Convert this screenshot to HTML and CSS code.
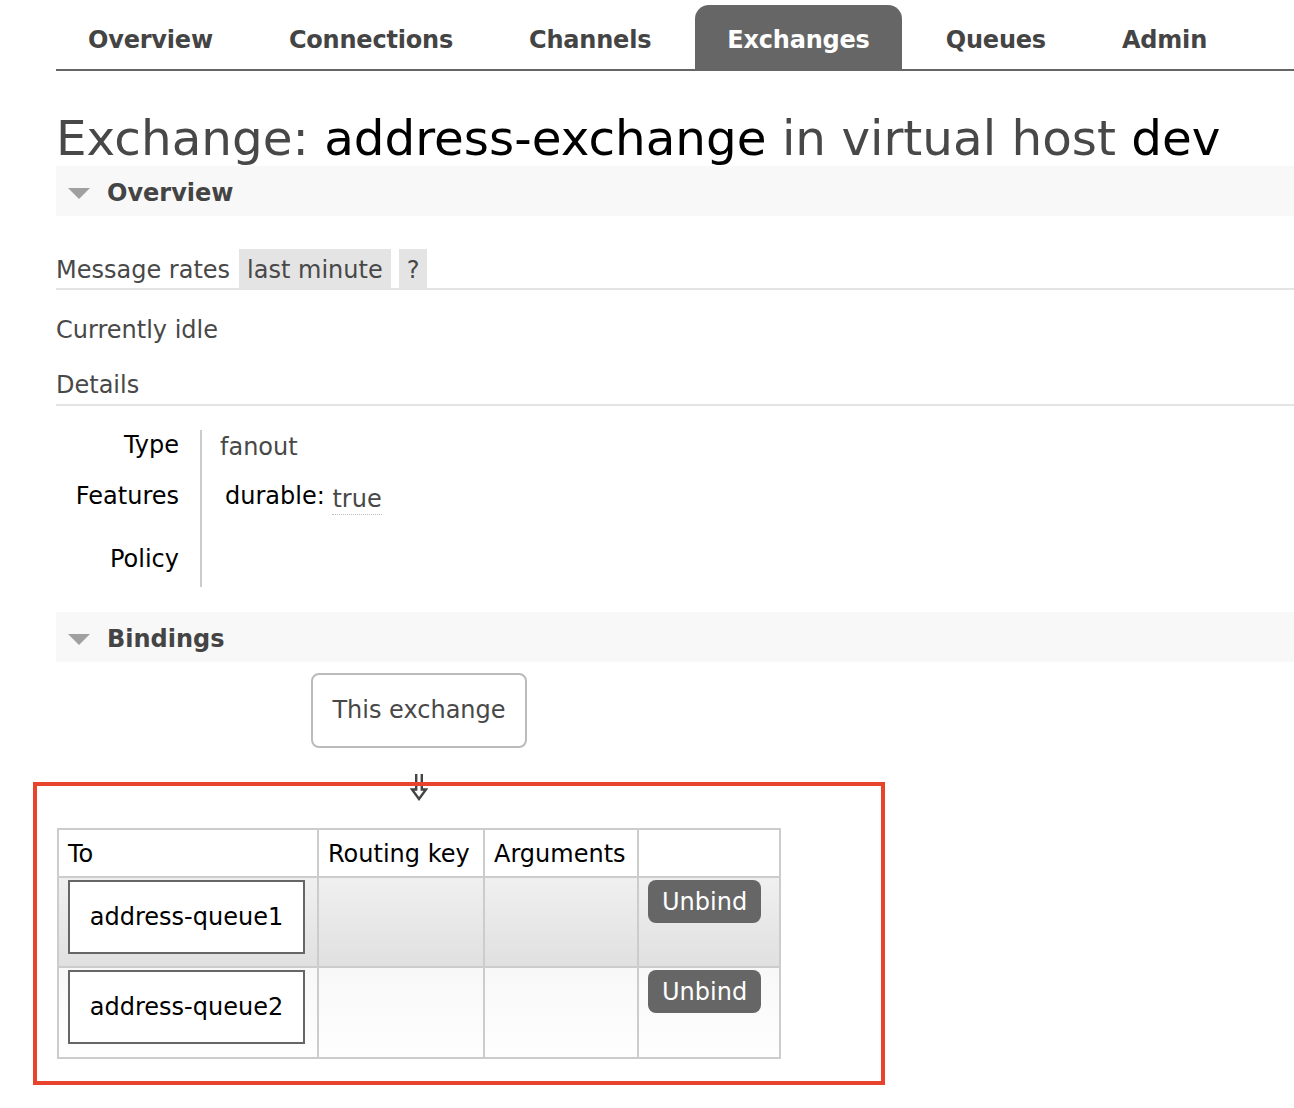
FILE: index.html
```html
<!DOCTYPE html>
<html lang="en">
<head>
<meta charset="utf-8">
<title>Exchange: address-exchange</title>
<link rel="stylesheet" href="styles.css">
</head>
<body>
<div class="page">
  <ul class="tabs">
    <li><a href="#">Overview</a></li>
    <li><a href="#">Connections</a></li>
    <li><a href="#">Channels</a></li>
    <li><a href="#" class="active">Exchanges</a></li>
    <li><a href="#">Queues</a></li>
    <li><a href="#">Admin</a></li>
  </ul>

  <h1 class="title">Exchange: <b>address-exchange</b> in virtual host <b>dev</b></h1>

  <div class="section">
    <h2 class="section-head"><span class="tri"></span>Overview</h2>
    <div class="rates-bar">
      <span class="rates-label">Message rates</span>
      <span class="chip">last minute</span>
      <span class="chip">?</span>
    </div>
    <p class="idle">Currently idle</p>
    <h3 class="sub">Details</h3>
    <table class="facts">
      <tr class="r1"><th>Type</th><td class="grey">fanout</td></tr>
      <tr class="r2"><th>Features</th><td><span class="feat">durable: <abbr class="val">true</abbr></span></td></tr>
      <tr class="r3"><th>Policy</th><td></td></tr>
    </table>
  </div>

  <div class="section">
    <h2 class="section-head"><span class="tri"></span>Bindings</h2>
    <div class="bindings">
      <div class="this-ex">This exchange</div>
      <svg class="arrow" width="18" height="28" viewBox="0 0 18 28" aria-hidden="true">
        <path d="M6.2 1 V16.5 H2 L9 26 L16 16.5 H11.8 V1" fill="none" stroke="#444" stroke-width="2.4" stroke-linejoin="miter"/>
      </svg>
      <table class="list">
        <thead>
          <tr><th class="c1">To</th><th class="c2">Routing key</th><th class="c3">Arguments</th><th class="c4"></th></tr>
        </thead>
        <tbody>
          <tr class="alt1">
            <td><span class="queue">address-queue1</span></td>
            <td></td><td></td>
            <td><button class="btn">Unbind</button></td>
          </tr>
          <tr class="alt2">
            <td><span class="queue">address-queue2</span></td>
            <td></td><td></td>
            <td><button class="btn">Unbind</button></td>
          </tr>
        </tbody>
      </table>
    </div>
  </div>

  <div class="annotation"></div>
</div>
</body>
</html>
```

FILE: styles.css
```css
html, body {
  margin: 0;
  padding: 0;
  background: #fff;
}
body {
  font-family: "DejaVu Sans", Verdana, sans-serif;
  font-size: 24px;
  line-height: 29px;
  color: #484848;
}
.page {
  position: relative;
  display: flow-root;
  padding-left: 56px;
  min-height: 1108px;
  box-sizing: border-box;
}

/* tabs */
.tabs {
  list-style: none;
  display: flex;
  gap: 12px;
  margin: 5px 0 0 0;
  padding: 0;
  border-bottom: 2px solid #666;
}
.tabs a {
  display: block;
  padding: 21px 32px 14px;
  font-weight: bold;
  letter-spacing: -0.2px;
  color: #444;
  text-decoration: none;
  border-radius: 14px 14px 0 0;
}
.tabs a.active {
  background: #666;
  color: #fff;
}

/* heading */
.title {
  margin: 39px 0 0 0;
  font-size: 48.4px;
  line-height: 56px;
  font-weight: normal;
  color: #484848;
  white-space: nowrap;
}
.title b {
  font-weight: normal;
  color: #000;
}

/* sections */
.section-head {
  margin: 0;
  background: #f8f8f8;
  height: 50px;
  box-sizing: border-box;
  padding: 13px 0 8px 12px;
  font-size: 24px;
  line-height: 29px;
  font-weight: bold;
  color: #444;
  display: flex;
  align-items: center;
}
.tri {
  width: 0;
  height: 0;
  border-left: 11px solid transparent;
  border-right: 11px solid transparent;
  border-top: 11px solid #a0a0a0;
  margin-right: 17px;
  margin-top: -1px;
}

.rates-bar {
  margin-top: 33px;
  display: flex;
  align-items: stretch;
  border-bottom: 2px solid #e4e4e4;
  height: 39px;
}
.rates-label {
  display: flex;
  align-items: center;
  margin-right: 9px;
  padding-top: 3px;
}
.chip {
  background: #e4e4e4;
  padding: 3px 8px 0;
  display: flex;
  align-items: center;
  margin-right: 8px;
}

.idle {
  margin: 26px 0 0 0;
}
.sub {
  margin: 26px 0 0 0;
  font-size: 24px;
  line-height: 29px;
  font-weight: normal;
  padding-bottom: 4px;
  border-bottom: 2px solid #e4e4e4;
}

.facts {
  border-collapse: collapse;
  margin-top: 24px;
}
.facts th {
  font-weight: normal;
  color: #000;
  text-align: right;
  vertical-align: top;
  padding: 0 21px 0 0;
  width: 123px;
  white-space: nowrap;
}
.facts td {
  vertical-align: top;
  border-left: 2px solid #ccc;
  padding: 0 20px 0 18px;
}
.facts .r1 th { height: 51px; padding-top: 1px; }
.facts .r1 td { padding-top: 3px; height: 49px; }
.facts .r2 th, .facts .r2 td { height: 63px; }
.facts .r3 th, .facts .r3 td { height: 42px; }
.grey { color: #484848; }
.feat {
  color: #000;
  padding-left: 5px;
}
.val {
  color: #484848;
  text-decoration: none;
  display: inline-block;
  position: relative;
  top: 3px;
  border-bottom: 1px dotted #bbb;
  padding-bottom: 2px;
  line-height: 26px;
}

.section + .section {
  margin-top: 25px;
}

/* bindings */
.bindings {
  display: inline-flex;
  flex-direction: column;
  align-items: center;
  margin-left: 1px;
}
.this-ex {
  margin-top: 11px;
  border: 2px solid #bbb;
  border-radius: 8px;
  padding: 21px 19px 21px 19px;
  color: #484848;
}
.arrow {
  display: block;
  margin-top: 25px;
  width: 18px;
  height: 28px;
}
.list {
  margin-top: 27px;
  border-collapse: collapse;
  border: 2px solid #ccc;
  color: #000;
}
.list th, .list td {
  border: 2px solid #ccc;
}
.list th {
  font-weight: normal;
  text-align: left;
  height: 48px;
  padding: 2px 9px 0;
  box-sizing: border-box;
  background: #fff;
  vertical-align: middle;
}
.list th.c1 { width: 260px; }
.list th.c2 { width: 166px; }
.list th.c3 { width: 154px; }
.list th.c4 { width: 142px; }
.list td {
  padding: 2px 10px 12px 9px;
  vertical-align: top;
  height: 74px;
}
.alt1 td { background: linear-gradient(#f0f0f0, #e0e0e0); }
.alt2 td { background: linear-gradient(#f8f8f8, #fefefe); }
.alt2 td { padding-bottom: 13px; }
.queue {
  display: block;
  width: 237px;
  height: 74px;
  box-sizing: border-box;
  border: 2px solid #666;
  background: #fff;
  color: #000;
  text-align: center;
  line-height: 70px;
}
.btn {
  font-family: "DejaVu Sans", Verdana, sans-serif;
  font-size: 24px;
  line-height: 29px;
  background: #666;
  color: #fff;
  border: none;
  border-radius: 8px;
  padding: 8px 14px 6px;
  height: 43px;
  display: block;
}

.annotation {
  position: absolute;
  left: 33px;
  top: 782px;
  width: 852px;
  height: 303px;
  box-sizing: border-box;
  border: 4px solid #e8432c;
  pointer-events: none;
}
```
